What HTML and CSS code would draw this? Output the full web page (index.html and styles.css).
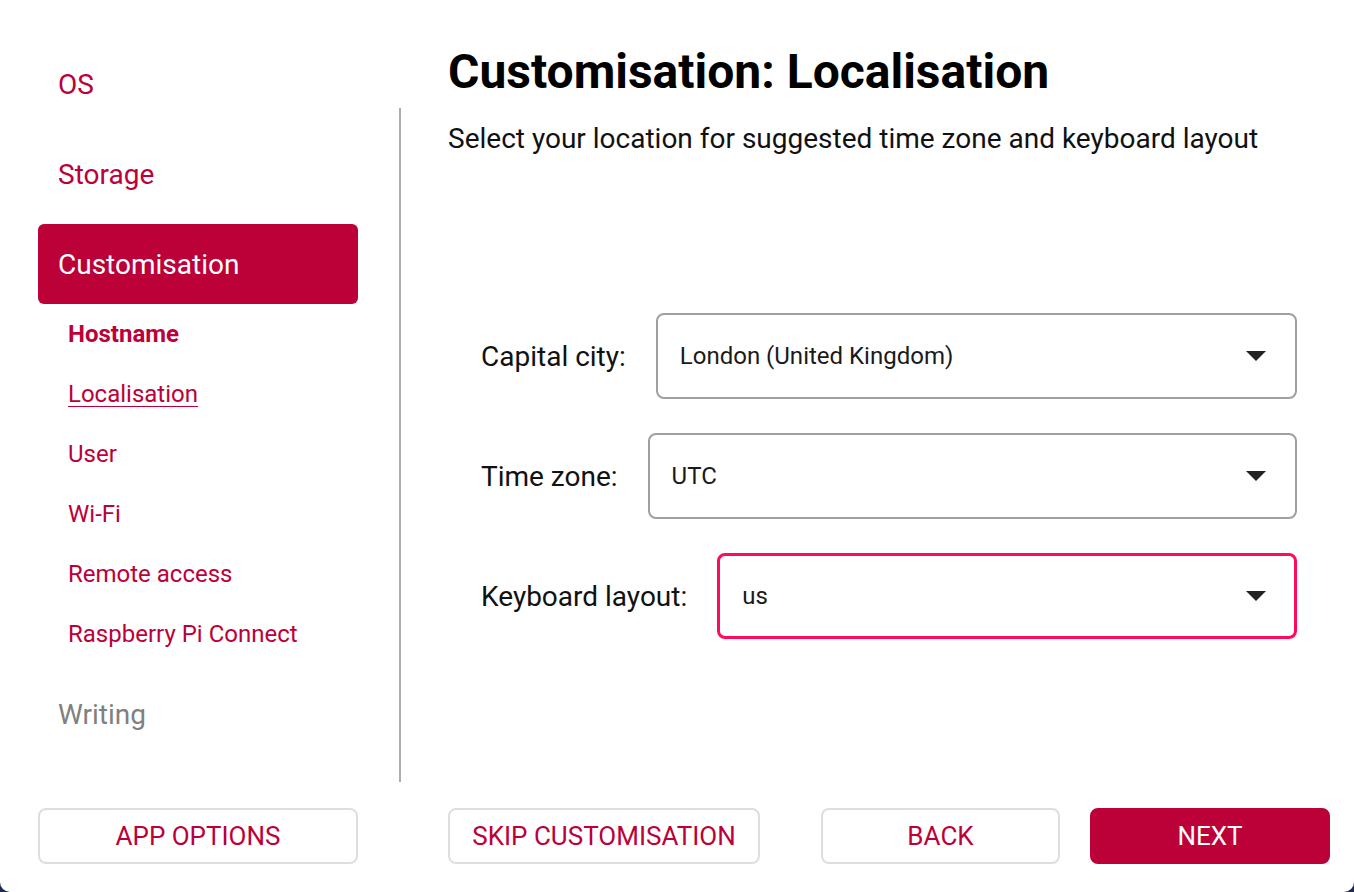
FILE: index.html
```html
<!DOCTYPE html>
<html>
    <head>
        <title>Raspberry Pi Imager</title>
        <link rel="stylesheet" href="styles.css">
    </head>
    <body>
        <div class="window">
            <div class="content">
                <nav class="sidebar">
                    <a class="nav-item">OS</a>
                    <a class="nav-item">Storage</a>
                    <div class="nav-group">
                        <a class="nav-item active">Customisation</a>
                        <div class="sub-list">
                            <a class="sub-item current">Hostname</a>
                            <a class="sub-item focused">Localisation</a>
                            <a class="sub-item">User</a>
                            <a class="sub-item">Wi-Fi</a>
                            <a class="sub-item">Remote access</a>
                            <a class="sub-item">Raspberry Pi Connect</a>
                        </div>
                    </div>
                    <a class="nav-item disabled">Writing</a>
                </nav>

                <div class="divider"></div>

                <main class="main">
                    <h1 class="title">Customisation: Localisation</h1>
                    <p class="subtitle">Select your location for suggested time zone and keyboard layout</p>

                    <div class="form">
                        <div class="form-row">
                            <span class="label">Capital city:</span>
                            <div class="select">
                                <span>London (United Kingdom)</span>
                                <span class="arrow"></span>
                            </div>
                        </div>
                        <div class="form-row">
                            <span class="label">Time zone:</span>
                            <div class="select">
                                <span>UTC</span>
                                <span class="arrow"></span>
                            </div>
                        </div>
                        <div class="form-row">
                            <span class="label">Keyboard layout:</span>
                            <div class="select focus">
                                <span>us</span>
                                <span class="arrow"></span>
                            </div>
                        </div>
                    </div>
                </main>
            </div>

            <div class="footer">
                <button class="button app-options">APP OPTIONS</button>
                <div class="footer-main">
                    <button class="button skip">SKIP CUSTOMISATION</button>
                    <button class="button back">BACK</button>
                    <button class="button primary next">NEXT</button>
                </div>
            </div>
        </div>
    </body>
</html>
```

FILE: styles.css
```css
* {
    box-sizing: border-box;
}

body {
    margin: 0;
    background-color: #1d2b4f;
    font-family: Roboto, "Liberation Sans", sans-serif;
}

.window {
    width: 1354px;
    height: 892px;
    background-color: #fff;
    border-radius: 0 0 10px 10px;
    overflow: hidden;
}

.content {
    display: flex;
    height: 790px;
}

/* left navigation */

.sidebar {
    width: 320px;
    margin-left: 38px;
    padding-top: 44px;
    display: flex;
    flex-direction: column;
    gap: 10px;
}

.nav-item {
    height: 80px;
    padding-left: 20px;
    display: flex;
    align-items: center;
    font-size: 28px;
    color: #bc0038;
    border-radius: 6px;
}

.nav-item.active {
    background-color: #bc0038;
    color: #fff;
}

.nav-item.disabled {
    color: #808080;
}

.sub-item {
    height: 60px;
    padding-left: 30px;
    display: flex;
    align-items: center;
    font-size: 24px;
    color: #bc0038;
}

.sub-item.current {
    font-weight: bold;
}

.sub-item.focused {
    text-decoration: underline;
    text-underline-offset: 4px;
    text-decoration-thickness: 1px;
}

.divider {
    width: 2px;
    margin: 108px 47px 8px 41px;
    background-color: #acacac;
}

/* right panel */

.main {
    flex: 1;
    padding: 44px 24px 0 0;
}

.title {
    margin: 0;
    font-size: 48px;
    line-height: 56px;
    font-weight: bold;
    color: #000;
}

.subtitle {
    margin: 22px 0 0;
    font-size: 28px;
    line-height: 34px;
    color: #111;
}

.form {
    margin-top: 157px;
    padding: 0 33px;
    display: flex;
    flex-direction: column;
    gap: 34px;
}

.form-row {
    display: flex;
    align-items: center;
    gap: 30px;
}

.label {
    font-size: 28px;
    color: #111;
}

.select {
    flex: 1;
    height: 86px;
    padding: 0 29px 0 22px;
    border: 2px solid #a0a0a0;
    border-radius: 8px;
    display: flex;
    align-items: center;
    justify-content: space-between;
    font-size: 24px;
    color: #1a1a1a;
}

.select.focus {
    border: 3px solid #ff0b5e;
    padding-left: 22px;
    padding-right: 28px;
}

.arrow {
    width: 0;
    height: 0;
    border-left: 10px solid transparent;
    border-right: 10px solid transparent;
    border-top: 10px solid #222;
}

/* bottom buttons */

.footer {
    display: flex;
    margin-top: 18px;
    padding: 0 24px 0 38px;
}

.footer-main {
    flex: 1;
    display: flex;
    margin-left: 90px;
}

.button {
    height: 56px;
    background-color: #fff;
    border: 2px solid #dedede;
    border-radius: 8px;
    font-family: Roboto, "Liberation Sans", sans-serif;
    font-size: 26px;
    color: #bc0038;
    cursor: pointer;
}

.app-options {
    width: 320px;
}

.skip {
    width: 312px;
}

.back {
    width: 239px;
    margin-left: auto;
}

.next {
    width: 240px;
    margin-left: 30px;
}

.button.primary {
    background-color: #bc0038;
    border-color: #bc0038;
    color: #fff;
}
```
